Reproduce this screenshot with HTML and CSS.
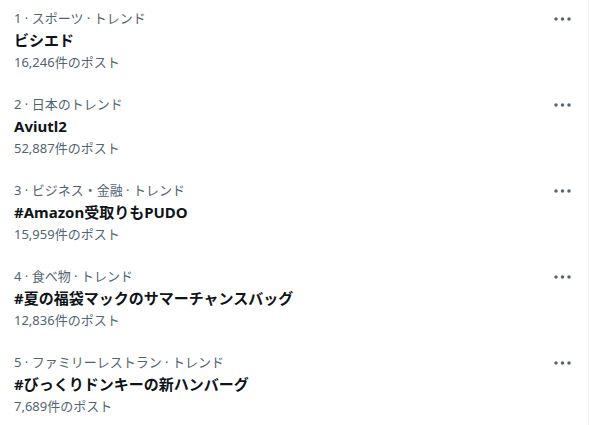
FILE: index.html
```html
<!DOCTYPE html>
<html lang="ja">
<head>
<meta charset="utf-8">
<title>トレンド</title>
<link rel="stylesheet" href="styles.css">
</head>
<body>
<main class="trends">
  <section class="trend">
    <div class="trend-body">
      <div class="meta">1 · スポーツ · トレンド</div>
      <div class="name">ビシエド</div>
      <div class="count">16,246件のポスト</div>
    </div>
    <button class="more" aria-label="その他"><svg viewBox="0 0 17 4" width="17" height="4"><circle cx="2" cy="2" r="1.75"/><circle cx="8.5" cy="2" r="1.75"/><circle cx="15" cy="2" r="1.75"/></svg></button>
  </section>
  <section class="trend">
    <div class="trend-body">
      <div class="meta">2 · 日本のトレンド</div>
      <div class="name">Aviutl2</div>
      <div class="count">52,887件のポスト</div>
    </div>
    <button class="more" aria-label="その他"><svg viewBox="0 0 17 4" width="17" height="4"><circle cx="2" cy="2" r="1.75"/><circle cx="8.5" cy="2" r="1.75"/><circle cx="15" cy="2" r="1.75"/></svg></button>
  </section>
  <section class="trend">
    <div class="trend-body">
      <div class="meta">3 · ビジネス・金融 · トレンド</div>
      <div class="name">#Amazon受取りもPUDO</div>
      <div class="count">15,959件のポスト</div>
    </div>
    <button class="more" aria-label="その他"><svg viewBox="0 0 17 4" width="17" height="4"><circle cx="2" cy="2" r="1.75"/><circle cx="8.5" cy="2" r="1.75"/><circle cx="15" cy="2" r="1.75"/></svg></button>
  </section>
  <section class="trend">
    <div class="trend-body">
      <div class="meta">4 · 食べ物 · トレンド</div>
      <div class="name">#夏の福袋マックのサマーチャンスバッグ</div>
      <div class="count">12,836件のポスト</div>
    </div>
    <button class="more" aria-label="その他"><svg viewBox="0 0 17 4" width="17" height="4"><circle cx="2" cy="2" r="1.75"/><circle cx="8.5" cy="2" r="1.75"/><circle cx="15" cy="2" r="1.75"/></svg></button>
  </section>
  <section class="trend">
    <div class="trend-body">
      <div class="meta">5 · ファミリーレストラン · トレンド</div>
      <div class="name">#びっくりドンキーの新ハンバーグ</div>
      <div class="count">7,689件のポスト</div>
    </div>
    <button class="more" aria-label="その他"><svg viewBox="0 0 17 4" width="17" height="4"><circle cx="2" cy="2" r="1.75"/><circle cx="8.5" cy="2" r="1.75"/><circle cx="15" cy="2" r="1.75"/></svg></button>
  </section>
</main>
</body>
</html>
```
FILE: styles.css
```css
html, body {
  margin: 0;
  padding: 0;
  background: #ffffff;
}

body {
  font-family: "Noto Sans", "Noto Sans CJK JP", sans-serif;
  color: #0f1419;
}

.trends {
  width: 588px;
  height: 425px;
  border-right: 1px solid #eff3f4;
}

.trend {
  display: flex;
  justify-content: space-between;
  align-items: flex-start;
  padding: 7px 17px 13px 14px;
  height: 66px;
}

.trend-body {
  display: flex;
  flex-direction: column;
}

.meta,
.count {
  font-size: 13px;
  line-height: 22px;
  color: #536471;
}

.name {
  font-size: 15px;
  line-height: 22px;
  font-weight: 700;
  color: #0f1419;
}

.more {
  border: 0;
  background: none;
  padding: 0;
  margin-top: 10px;
  display: flex;
  fill: #536471;
  cursor: pointer;
}
```
